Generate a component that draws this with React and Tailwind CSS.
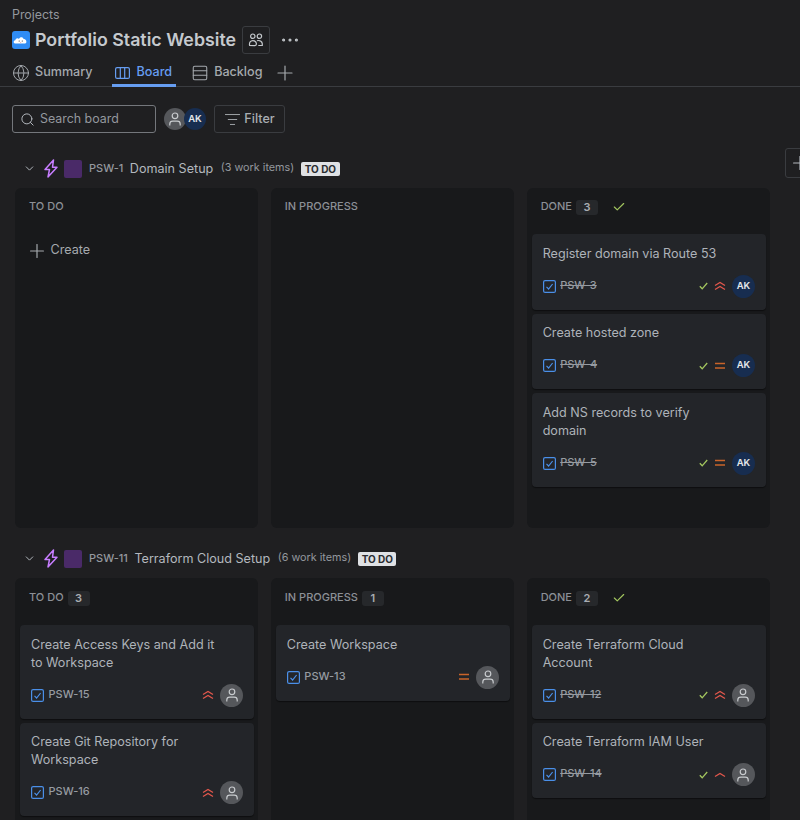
import { Globe, Rows3, Plus, Search, ListFilter, Ellipsis, ChevronDown, Check } from 'lucide-react';

const PURPLE = '#c77dff';

function CloudLogo() {
  return (
    <svg width="18" height="18" viewBox="0 0 18 18" className="shrink-0">
      <rect width="18" height="18" rx="3" fill="#2f8cf5" />
      <path d="M3 12.500c-1.600-.3-1.800-3 .3-3.300.3-2 2.600-2.600 3.700-1.300C7.700 5.600 11 5.500 11.600 8c2.400-.8 4.200 3.900 1.400 4.500z" fill="#fff" />
      <circle cx="7.200" cy="10" r=".6" fill="#333" />
      <circle cx="10.300" cy="10" r=".6" fill="#333" />
      <path d="M8 11h1.400l-.7.7z" fill="#ef6a6a" />
    </svg>
  );
}

function TeamIcon() {
  return (
    <svg width="16" height="16" viewBox="0 0 16 16" fill="none" stroke="#c4c8cc" strokeWidth="1.200">
      <circle cx="4.800" cy="4.200" r="2.200" />
      <circle cx="11.400" cy="4.200" r="2.200" />
      <path d="M1.600 13.500c-.6-3 1-4.800 3.200-4.800 2.400 0 3.600 1.600 3.600 3.400 0 1-.7 1.500-1.500 1.500z" />
      <path d="M9 8.800c.6-.3 1.500-.4 2.400-.1 2 .5 3.200 2.300 2.900 4.800h-4" />
    </svg>
  );
}

function BoardIcon() {
  return (
    <svg width="15" height="12" viewBox="0 0 15 12" fill="none" stroke="#669df1" strokeWidth="1.200" className="shrink-0">
      <rect x=".6" y=".6" width="13.800" height="10.800" rx="1.500" />
      <path d="M5.300 .6v10.800M9.700 .6v10.800" />
    </svg>
  );
}

function EpicIcon() {
  return (
    <svg width="16" height="19" viewBox="0 0 16 19" fill="none" stroke={PURPLE} strokeWidth="1.500" strokeLinejoin="round" className="shrink-0">
      <path d="M10.500 1 2 10.500h4.500L5 18l9-9.800H9.500z" />
    </svg>
  );
}

function TaskBox() {
  return (
    <svg width="13" height="13" viewBox="0 0 13 13" fill="none" className="shrink-0">
      <rect x=".6" y=".6" width="11.800" height="11.800" rx="1.500" stroke="#4a8fe8" strokeWidth="1.200" />
      <path d="M3.500 6.800 5.600 9l4-5" stroke="#4a8fe8" strokeWidth="1.200" />
    </svg>
  );
}

function DoneTick() {
  return (
    <svg width="9" height="8" viewBox="0 0 9 8" fill="none" stroke="#a3c65f" strokeWidth="1.300" className="shrink-0">
      <path d="M.8 4.200 3.200 6.800 8.200 1" />
    </svg>
  );
}

function Priority({ level }) {
  if (level === 'medium') {
    return (
      <svg width="12" height="8" viewBox="0 0 12 8" className="shrink-0">
        <path d="M1 1.500h10M1 6h10" stroke="#c9642a" strokeWidth="1.500" />
      </svg>
    );
  }
  return (
    <svg width="12" height="10" viewBox="0 0 12 10" fill="none" stroke="#e2574c" strokeWidth="1.300" className="shrink-0">
      <path d={level === 'high' ? 'M1 4.500 6 1.500l5 3' : 'M1 6.500l5-3 5 3'} />
      {level === 'high' && <path d="M1 8.500 6 5.500l5 3" />}
    </svg>
  );
}

function Avatar({ size = 'w-[23px] h-[23px]', initials, className = '' }) {
  if (initials) {
    return (
      <span className={`${size} ${className} flex shrink-0 items-center justify-center rounded-full bg-[#172d50] text-[9.500px] font-semibold text-[#e4e7ea]`}>
        {initials}
      </span>
    );
  }
  return (
    <span className={`${size} ${className} flex shrink-0 items-center justify-center rounded-full bg-[#55575b]`}>
      <svg width="16" height="16" viewBox="0 0 16 16" fill="none" stroke="#c8cbce" strokeWidth="1.200">
        <circle cx="8" cy="4.800" r="2.800" />
        <path d="M2.800 14.500v-1.500c0-1.800 1.200-2.800 3-2.800h4.400c1.800 0 3 1 3 2.800v1.500" />
      </svg>
    </span>
  );
}

function Card({ title, id, done, priority, initials }) {
  return (
    <div className="rounded-[4px] bg-[#232529] px-[11px] pt-[10.500px] pb-[11.500px] shadow-[0_1px_1px_rgba(0,0,0,0.45)]">
      <p className="max-w-[188px] text-[12.600px] leading-[18px] text-[#aeb3b9]">{title}</p>
      <div className="mt-[11.500px] flex h-[24px] items-center">
        <TaskBox />
        <span className={`ml-[4.500px] -mt-[2px] text-[11px] font-medium text-[#969ba1] ${done ? 'line-through' : ''}`}>{id}</span>
        <span className="ml-auto flex items-center gap-[6px]">
          {done && <DoneTick />}
          <Priority level={priority} />
          <Avatar initials={initials} />
        </span>
      </div>
    </div>
  );
}

function Column({ name, count, done, create, cards = [], height, headerClass = 'h-[46px] pb-[10px]' }) {
  return (
    <div className={`${height} rounded-[6px] bg-[#18191b] pl-[5px] pr-[4px]`}>
      <div className={`${headerClass} flex items-center px-[9px] text-[11px] font-medium text-[#8c9096]`}>
        <span>{name}</span>
        {count && (
          <span className="ml-[4px] mt-[2px] flex h-[15px] w-[22px] items-center justify-center rounded-[3px] bg-[#26282b] text-[11px] font-semibold text-[#a9adb2]">
            {count}
          </span>
        )}
        {done && <Check size={14} color="#a3c65f" strokeWidth={2} className="ml-[14px] mt-[2px]" />}
      </div>
      {create && (
        <div className="mt-[5.500px] flex items-center gap-[2.500px] pl-[6px] text-[12.600px] text-[#a5a9ae]">
          <Plus size={22} strokeWidth={1.300} />
          <span>Create</span>
        </div>
      )}
      <div className="flex flex-col gap-[4px]">
        {cards.map((card) => (
          <Card key={card.id} {...card} />
        ))}
      </div>
    </div>
  );
}

function EpicHeader({ id, title, count }) {
  return (
    <div className="flex h-[40px] items-center pt-[1px] pl-[23px]">
      <ChevronDown size={13} color="#b3b8be" strokeWidth={1.800} />
      <span className="ml-[7px]"><EpicIcon /></span>
      <span className="ml-[5px] h-[18px] w-[18px] rounded-[2px] bg-[#4a2a68]" />
      <span className="ml-[7px] -mt-[1px] text-[11px] font-medium text-[#94989e]">{id}</span>
      <span className="ml-[6.500px] mt-[1px] text-[12.600px] text-[#b3b8be]">{title}</span>
      <span className="ml-[7.500px] text-[10.800px] text-[#94989e]">({count} work items)</span>
      <span className="ml-[7px] rounded-[2px] bg-[#dfe1e4] px-[3.500px] text-[10px] leading-[14px] font-bold text-[#2a2c30]">TO DO</span>
    </div>
  );
}

const AK = 'AK';
const LOWER_HEADER = 'h-[47px] pb-[9px]';

export default function App() {
  return (
    <div className="relative h-[820px] w-[800px] overflow-hidden bg-[#1f1f21] font-['Inter',sans-serif]">
      <header className="pt-[7px]">
        <p className="h-[15px] pl-[12px] text-[12.400px] leading-[15px] text-[#94989e]">Projects</p>
        <div className="mt-[4px] flex h-[28px] items-center pl-[12px]">
          <CloudLogo />
          <h1 className="ml-[5px] text-[17.800px] font-semibold text-[#c5c9ce]">Portfolio Static Website</h1>
          <span className="ml-[6px] flex h-[28px] w-[28px] items-center justify-center rounded-[3px] border border-[#3a3c40]">
            <TeamIcon />
          </span>
          <Ellipsis size={22} color="#c4c8cc" strokeWidth={1.400} className="ml-[9px]" />
        </div>
        <nav className="flex h-[33px] items-stretch border-b border-[#3a3c40] pt-[5px] pl-[11.500px] text-[12.600px] font-medium text-[#a5a9ae]">
          <span className="flex items-center gap-[5.500px]">
            <Globe size={18} strokeWidth={1.300} />
            Summary
          </span>
          <span className="relative ml-[19px] flex items-center gap-[7px] pr-[4px] pl-[3px] text-[#669df1]">
            <BoardIcon />
            Board
            <span className="absolute -bottom-[1px] left-0 right-0 h-[3px] bg-[#669df1]" />
          </span>
          <span className="ml-[15px] flex items-center gap-[5px]">
            <Rows3 size={18} strokeWidth={1.400} />
            Backlog
          </span>
          <span className="ml-[11px] flex items-center">
            <Plus size={24} strokeWidth={1.200} />
          </span>
        </nav>
      </header>

      <div className="mt-[18px] flex h-[28px] items-center pl-[12px]">
        <div className="flex h-[28px] w-[144px] items-center gap-[5px] rounded-[3px] border border-[#74777c] px-[7px] text-[12.400px] text-[#94989e]">
          <Search size={15} color="#b3b8be" strokeWidth={1.600} />
          <span>Search board</span>
        </div>
        <Avatar size="w-[22px] h-[22px]" className="ml-[8px]" />
        <Avatar size="w-[22px] h-[22px]" initials={AK} className="-ml-[2px]" />
        <div className="ml-[8px] flex h-[28px] w-[71px] items-center justify-center gap-[3px] rounded-[3px] border border-[#3a3c40] text-[12.600px] font-medium text-[#a9adb2]">
          <ListFilter size={17} strokeWidth={1.300} />
          <span>Filter</span>
        </div>
      </div>

      {/* add column button sits over the board, cut off by the window */}
      <div className="absolute left-[785px] top-[148px] flex h-[30px] w-[30px] items-center justify-center rounded-[3px] border border-[#3a3c40] bg-[#1f1f21]">
        <Plus size={22} color="#b3b8be" strokeWidth={1.300} />
      </div>

      <section className="mt-[15px]">
        <EpicHeader id="PSW-1" title="Domain Setup" count={3} />
        <div className="ml-[15px] grid w-[755px] grid-cols-3 gap-[12.500px]">
          <Column name="TO DO" create height="h-[340px]" />
          <Column name="IN PROGRESS" height="h-[340px]" />
          <Column
            name="DONE"
            count="3"
            done
            height="h-[340px]"
            cards={[
              { title: 'Register domain via Route 53', id: 'PSW-3', done: true, priority: 'high', initials: AK },
              { title: 'Create hosted zone', id: 'PSW-4', done: true, priority: 'medium', initials: AK },
              { title: 'Add NS records to verify domain', id: 'PSW-5', done: true, priority: 'medium', initials: AK },
            ]}
          />
        </div>
      </section>

      <section className="mt-[10px]">
        <EpicHeader id="PSW-11" title="Terraform Cloud Setup" count={6} />
        <div className="ml-[15px] grid w-[755px] grid-cols-3 gap-[12.500px]">
          <Column
            name="TO DO"
            count="3"
            height="h-[300px]"
            headerClass={LOWER_HEADER}
            cards={[
              { title: 'Create Access Keys and Add it to Workspace', id: 'PSW-15', priority: 'high' },
              { title: 'Create Git Repository for Workspace', id: 'PSW-16', priority: 'high' },
            ]}
          />
          <Column
            name="IN PROGRESS"
            count="1"
            height="h-[300px]"
            headerClass={LOWER_HEADER}
            cards={[{ title: 'Create Workspace', id: 'PSW-13', priority: 'medium' }]}
          />
          <Column
            name="DONE"
            count="2"
            done
            height="h-[300px]"
            headerClass={LOWER_HEADER}
            cards={[
              { title: 'Create Terraform Cloud Account', id: 'PSW-12', done: true, priority: 'high' },
              { title: 'Create Terraform IAM User', id: 'PSW-14', done: true, priority: 'low' },
            ]}
          />
        </div>
      </section>
    </div>
  );
}
